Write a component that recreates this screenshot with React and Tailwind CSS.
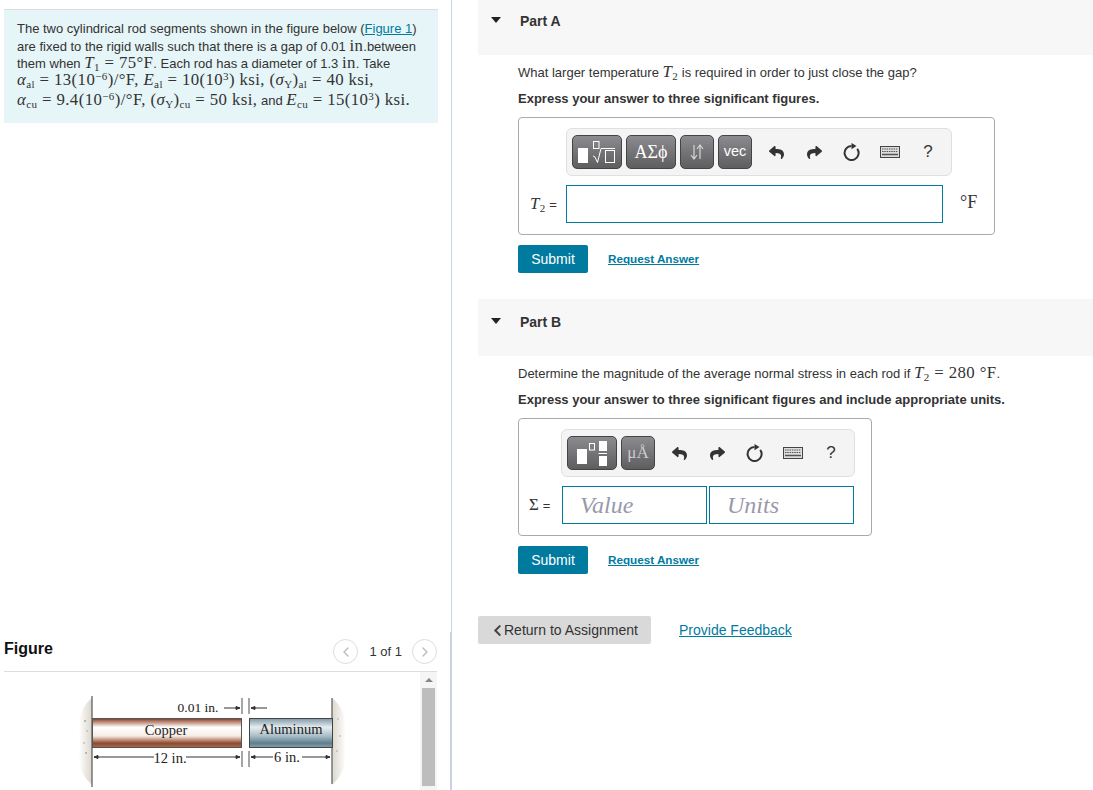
import { FaReply, FaShare, FaChevronLeft } from "react-icons/fa";
import { ChevronLeft, ChevronRight } from "lucide-react";

const sans = "font-['Liberation_Sans',Arial,sans-serif]";
const serif = "font-['Liberation_Serif','Times_New_Roman',serif]";

function M({ children }) {
  return <span className={`${serif} text-[16.8px] tracking-[0.4px]`}>{children}</span>;
}

function V({ children }) {
  return <i className={serif}>{children}</i>;
}

function S({ children }) {
  return <sub className="text-[11px]">{children}</sub>;
}

function P({ children }) {
  return <sup className="text-[11px]">{children}</sup>;
}

function ToolButton({ width, children }) {
  return (
    <div
      className={`${width} h-[34px] flex items-center justify-center rounded-[5px] border border-[#444] bg-gradient-to-b from-[#8c8c90] to-[#5e5e61] text-white`}
    >
      {children}
    </div>
  );
}

function KeyboardIcon() {
  return (
    <svg width="20" height="12" viewBox="0 0 20 12">
      <rect x="0.5" y="0.5" width="19" height="11" fill="#ddd" stroke="#444" />
      <path d="M2 3h16M2 5.5h16" stroke="#555" strokeWidth="1.2" strokeDasharray="1.5 0.8" />
      <path d="M2 8.5h16" stroke="#555" strokeWidth="1.5" />
    </svg>
  );
}

function ResetIcon() {
  return (
    <svg width="18" height="18" viewBox="0 0 18 18">
      <path d="M14.2 5.8A7 7 0 1 1 8.5 3" fill="none" stroke="#333" strokeWidth="2" />
      <path d="M8.5 0L13.5 3L8.5 6.3z" fill="#333" />
    </svg>
  );
}

function RadicalIcon() {
  return (
    <svg width="38" height="22" viewBox="0 0 38 22" className="block">
      <rect x="0" y="7" width="10" height="15" fill="#fff" />
      <rect x="15.5" y="0.5" width="5.5" height="7" fill="none" stroke="#fff" />
      <path d="M15 15l2 1l2.5 5.5l3.5-14h14" fill="none" stroke="#fff" />
      <rect x="27.5" y="9.5" width="9" height="12" fill="none" stroke="#fff" />
    </svg>
  );
}

function FractionIcon() {
  return (
    <svg width="30" height="26" viewBox="0 0 30 26" className="block">
      <rect x="0" y="9" width="10" height="15" fill="#fff" />
      <rect x="12.5" y="3.5" width="5" height="6.5" fill="none" stroke="#fff" />
      <rect x="22" y="1" width="8" height="10" fill="#fff" />
      <rect x="21.5" y="13" width="9" height="1" fill="#fff" />
      <rect x="22" y="16" width="8" height="10" fill="#fff" />
    </svg>
  );
}

function ArrowsIcon() {
  return (
    <svg width="14" height="16" viewBox="0 0 14 16" className="block">
      <path d="M4 1V14M1 11l3 4l3-4" fill="none" stroke="#d5d5d5" strokeWidth="1.2" />
      <path d="M10 15V2M7 5l3-4l3 4" fill="none" stroke="#d5d5d5" strokeWidth="1.2" />
    </svg>
  );
}

function ToolActions() {
  return (
    <div className="flex items-center ml-[1px]">
      <div className="w-[38px] flex justify-center"><FaReply size={15} color="#333" /></div>
      <div className="w-[38px] flex justify-center"><FaShare size={15} color="#333" /></div>
      <div className="w-[38px] flex justify-center"><ResetIcon /></div>
      <div className="w-[38px] flex justify-center"><KeyboardIcon /></div>
      <div className={`w-[38px] text-center text-[17px] text-[#333] ${sans}`}>?</div>
    </div>
  );
}

function SubmitRow() {
  return (
    <div className="flex items-center ml-[40px]">
      <button className="w-[70px] h-[28px] bg-[#007b9f] rounded-[2px] text-white text-[14px]">Submit</button>
      <a className="ml-[20px] text-[#007b9f] text-[11.7px] font-bold underline">Request Answer</a>
    </div>
  );
}

function PartHeader({ title, className }) {
  return (
    <div className={`${className} bg-[#f7f7f7] flex items-start pl-[13px]`}>
      <div className="w-0 h-0 mt-[5px] border-x-[5px] border-x-transparent border-t-[6px] border-t-[#222]" />
      <div className="ml-[19px] text-[14px] leading-[18px] font-bold text-[#333]">{title}</div>
    </div>
  );
}

function Rods() {
  return (
    <svg width="280" height="100" viewBox="0 0 280 100" className="block">
      <defs>
        <linearGradient id="copper" x1="0" y1="0" x2="0" y2="1">
          <stop offset="0" stopColor="#6d3a28" />
          <stop offset="0.07" stopColor="#a86a52" />
          <stop offset="0.3" stopColor="#fff" />
          <stop offset="0.6" stopColor="#f7ece6" />
          <stop offset="0.85" stopColor="#8f4a2c" />
          <stop offset="1" stopColor="#a86a50" />
        </linearGradient>
        <linearGradient id="alum" x1="0" y1="0" x2="0" y2="1">
          <stop offset="0" stopColor="#7f99a6" />
          <stop offset="0.3" stopColor="#e6edf0" />
          <stop offset="0.6" stopColor="#a9bec8" />
          <stop offset="0.85" stopColor="#5e7e8d" />
          <stop offset="1" stopColor="#86a0ac" />
        </linearGradient>
        <linearGradient id="wallL" x1="0" y1="0" x2="1" y2="0">
          <stop offset="0" stopColor="#fff" />
          <stop offset="0.6" stopColor="#e8e6df" />
          <stop offset="1" stopColor="#dbd8ce" />
        </linearGradient>
        <linearGradient id="wallR" x1="0" y1="0" x2="1" y2="0">
          <stop offset="0" stopColor="#dbd8ce" />
          <stop offset="0.4" stopColor="#e8e6df" />
          <stop offset="1" stopColor="#fff" />
        </linearGradient>
      </defs>
      <path d="M17 7Q0 20 5 50Q0 80 17 94z" fill="url(#wallL)" />
      <path d="M257 7Q274 20 270 50Q274 80 257 94z" fill="url(#wallR)" />
      <g fill="#a9a69c">
        <circle cx="10" cy="30" r="1" />
        <circle cx="12" cy="40" r="0.8" />
        <circle cx="9" cy="52" r="0.8" />
        <circle cx="11" cy="62" r="1" />
        <circle cx="263" cy="28" r="0.8" />
        <circle cx="265" cy="45" r="0.8" />
        <circle cx="262" cy="60" r="0.8" />
      </g>
      <path d="M17 5V96" stroke="#555" strokeWidth="1.2" />
      <path d="M257 7V93" stroke="#777" strokeWidth="1.5" />
      <rect x="17.5" y="27.5" width="149" height="29" fill="url(#copper)" stroke="#555" />
      <rect x="174.5" y="27.5" width="83" height="29" fill="url(#alum)" stroke="#444" />
      <path d="M167 7V23M174 7V23M167 60V76M174 60V76" stroke="#777" strokeWidth="1.3" />
      <g fontFamily="'Liberation Serif',serif" fontSize="14.5" fill="#222" textAnchor="middle">
        <text x="123" y="21" fontSize="13.5">0.01 in.</text>
        <text x="91" y="44">Copper</text>
        <text x="216" y="43">Aluminum</text>
        <text x="95" y="72">12 in.</text>
        <text x="212" y="71">6 in.</text>
      </g>
      <g stroke="#333" fill="#333" strokeWidth="1">
        <path d="M149 17H165" />
        <path d="M165 17l-4-1.5v3z" />
        <path d="M176 17H192" />
        <path d="M176 17l4-1.5v3z" />
        <path d="M19 66H79M111 66H165" />
        <path d="M19 66l4-1.5v3zM165 66l-4-1.5v3z" />
        <path d="M176 66H198M227 66H255" />
        <path d="M176 66l4-1.5v3zM255 66l-4-1.5v3z" />
      </g>
    </svg>
  );
}

export default function App() {
  return (
    <div className={`${sans} w-[1093px] h-[790px] overflow-hidden bg-white flex text-[#333]`}>
      {/* left column */}
      <div className="w-[452px] h-full shrink-0 border-r border-[#c5d3e3] pt-[9px] pl-[4px] flex flex-col">
        <div className="h-[114px] mr-[13px] bg-[#e6f5f7] border-t border-[#ddd] pt-[11px] pl-[13px] text-[13px] whitespace-nowrap">
          <div className="h-[16px] leading-[16px]">The two cylindrical rod segments shown in the figure below (<a className="text-[#007b9f] underline">Figure 1</a>)</div>
          <div className="h-[17px] leading-[17px]">are fixed to the rigid walls such that there is a gap of 0.01 <M>in</M>.between</div>
          <div className="h-[17px] leading-[17px]">them when <M><V>T</V><S>1</S> = 75°F</M>. Each rod has a diameter of 1.3 <M>in</M>. Take</div>
          <div className="h-[17px] leading-[17px]"><M><V>α</V><S>al</S> = 13(10<P>−6</P>)/°F, <V>E</V><S>al</S> = 10(10<P>3</P>) ksi, (<V>σ</V><S>Y</S>)<S>al</S> = 40 ksi,</M></div>
          <div className="h-[17px] leading-[17px] mt-[3px]"><M><V>α</V><S>cu</S> = 9.4(10<P>−6</P>)/°F, (<V>σ</V><S>Y</S>)<S>cu</S> = 50 ksi,</M> and <M><V>E</V><S>cu</S> = 15(10<P>3</P>) ksi.</M></div>
        </div>

        {/* figure panel */}
        <div className="mt-[509px] flex-1 min-h-0 flex flex-col border-r border-[#c5d3e3] pr-[13px]">
          <div className="h-[40px] border-b border-[#ddd] flex items-start justify-between">
            <div className="text-[16px] font-bold text-[#111] mt-[5px]">Figure</div>
            <div className="flex items-center mt-[7px] mr-[0px]">
              <div className="w-[25px] h-[25px] rounded-full border border-[#ddd] flex items-center justify-center">
                <ChevronLeft size={16} color="#bbb" />
              </div>
              <div className="ml-[11px] mr-[10px] text-[13px]">1 of 1</div>
              <div className="w-[25px] h-[25px] rounded-full border border-[#ddd] flex items-center justify-center">
                <ChevronRight size={16} color="#bbb" />
              </div>
            </div>
          </div>

          <div className="flex flex-1 min-h-0">
            <div className="flex-1 pt-[19px] pl-[71px]">
              <Rods />
            </div>
            <div className="w-[17px] flex flex-col bg-[#f5f5f5]">
              <div className="h-[16px] flex items-center justify-center">
                <div className="w-0 h-0 border-x-[4px] border-x-transparent border-b-[4px] border-b-[#888]" />
              </div>
              <div className="h-[98px] mx-[2px] bg-[#bdbdbd]" />
            </div>
          </div>
        </div>
      </div>

      {/* right column */}
      <div className="flex-1 pl-[26px] flex flex-col text-[13px]">
        <PartHeader title="Part A" className="h-[55px] pt-[12px]" />
        <div className="pl-[40px] mt-[8px] h-[18px] leading-[18px]">
          What larger temperature <M><V>T</V><S>2</S></M> is required in order to just close the gap?
        </div>
        <div className="pl-[40px] mt-[9px] h-[18px] font-bold leading-[18px]">Express your answer to three significant figures.</div>

        <div className="ml-[40px] mt-[9px] w-[477px] h-[118px] border border-[#aaa] rounded-[4px] pt-[10px] pl-[47px]">
          <div className="w-[386px] h-[48px] bg-[#f4f4f4] border border-[#e0e0e0] rounded-[6px] flex items-center pl-[5px] gap-[4px]">
            <ToolButton width="w-[50px]"><RadicalIcon /></ToolButton>
            <ToolButton width="w-[50px]">
              <span className={`${serif} text-[18px] whitespace-nowrap`}>ΑΣϕ</span>
            </ToolButton>
            <ToolButton width="w-[34px]"><ArrowsIcon /></ToolButton>
            <ToolButton width="w-[34px]">
              <span className="text-[14.5px]">vec</span>
            </ToolButton>
            <ToolActions />
          </div>
          <div className="flex items-center mt-[9px] -ml-[36px]">
            <div className="w-[36px] text-[13px] whitespace-nowrap"><M><V>T</V><S>2</S></M> =</div>
            <input className="w-[377px] h-[38px] border border-[#007b9f] outline-none" />
            <div className={`${serif} ml-[17px] -mt-[3px] text-[18px]`}>°F</div>
          </div>
        </div>

        <div className="mt-[10px]"><SubmitRow /></div>

        <div className="mt-[26px]"><PartHeader title="Part B" className="h-[57px] pt-[14px]" /></div>
        <div className="pl-[40px] mt-[8px] h-[18px] leading-[18px]">
          Determine the magnitude of the average normal stress in each rod if <M><V>T</V><S>2</S> = 280 °F</M>.
        </div>
        <div className="pl-[40px] mt-[9px] h-[18px] font-bold leading-[18px]">Express your answer to three significant figures and include appropriate units.</div>

        <div className="ml-[40px] mt-[9px] w-[354px] h-[118px] border border-[#aaa] rounded-[4px] pt-[10px] pl-[42px]">
          <div className="w-[294px] h-[48px] bg-[#f4f4f4] border border-[#e0e0e0] rounded-[6px] flex items-center pl-[5px] gap-[4px]">
            <ToolButton width="w-[50px]"><FractionIcon /></ToolButton>
            <ToolButton width="w-[34px]">
              <span className={`${serif} text-[17px] text-[#ccc]`}>μÅ</span>
            </ToolButton>
            <ToolActions />
          </div>
          <div className="flex items-center mt-[9px] -ml-[32px]">
            <div className="w-[33px] text-[13px] whitespace-nowrap"><M>Σ</M> =</div>
            <input placeholder="Value" className={`${serif} italic text-[24px] pl-[17px] w-[145px] h-[38px] border border-[#007b9f] outline-none placeholder:text-[#99a]`} />
            <input placeholder="Units" className={`${serif} italic text-[24px] pl-[17px] ml-[2px] w-[145px] h-[38px] border border-[#007b9f] outline-none placeholder:text-[#99a]`} />
          </div>
        </div>

        <div className="mt-[10px]"><SubmitRow /></div>

        <div className="mt-[42px] flex items-center">
          <div className="w-[173px] h-[28px] bg-[#d9d9d9] rounded-[2px] flex items-center pl-[13px] text-[14px]">
            <FaChevronLeft size={13} color="#444" />
            <span>Return to Assignment</span>
          </div>
          <a className="ml-[28px] text-[14px] text-[#007b9f] underline">Provide Feedback</a>
        </div>
      </div>
    </div>
  );
}
